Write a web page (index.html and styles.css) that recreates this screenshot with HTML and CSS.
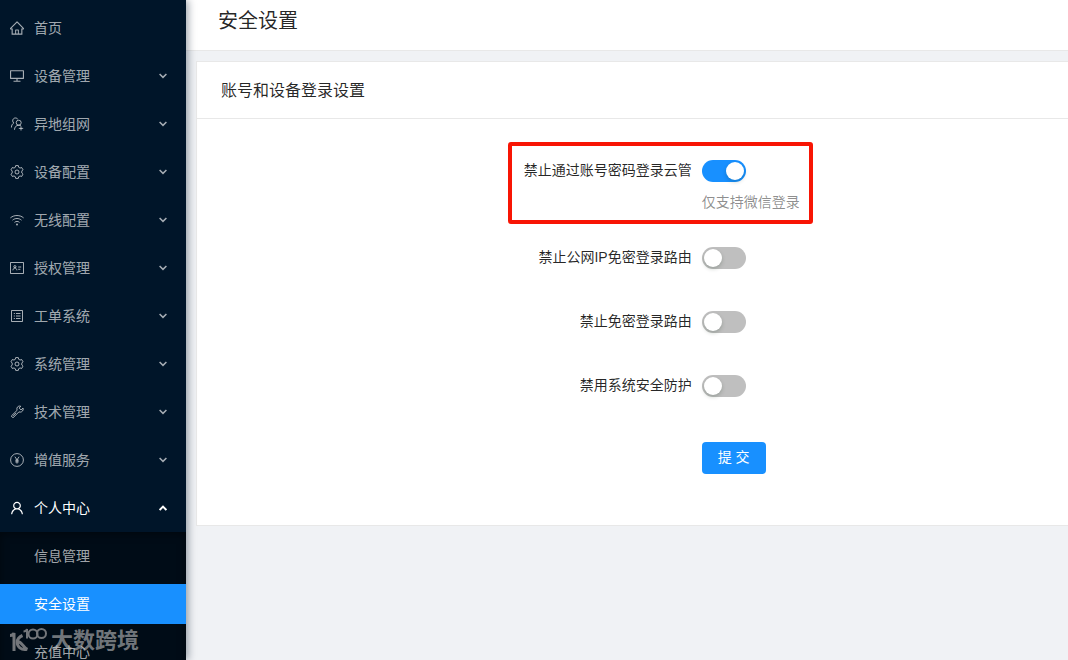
FILE: index.html
```html
<!DOCTYPE html>
<html lang="zh-CN">

<head>
    <meta charset="UTF-8">
    <meta name="viewport" content="width=device-width, initial-scale=1.0">
    <title>安全设置</title>
    <link rel="stylesheet" href="styles.css">
</head>

<body>
    <!-- 图标 -->
    <svg class="sprite" aria-hidden="true">
        <symbol id="icon-home" viewBox="64 64 896 896">
            <path fill="currentColor" stroke="none" d="M946.5 505L560.1 118.8l-25.9-25.9a31.5 31.5 0 0 0-44.4 0L77.5 505a63.9 63.9 0 0 0-18.8 46c.4 35.2 29.7 63.3 64.9 63.3h42.5V940h691.8V614.3h43.4c17.1 0 33.2-6.7 45.3-18.8a63.6 63.6 0 0 0 18.7-45.3c0-17-6.7-33.1-18.9-45.2zM568 868H456V664h112v204zm217.9-325.7V868H632V640c0-22.1-17.9-40-40-40H432c-22.1 0-40 17.9-40 40v228H238.1V542.3h-96l370-369.7 23.1 23.1L882 542.3h-96.1z" />
        </symbol>
        <symbol id="icon-desktop" viewBox="64 64 896 896">
            <path fill="currentColor" stroke="none" d="M928 140H96c-17.7 0-32 14.3-32 32v496c0 17.7 14.3 32 32 32h380v112H304c-8.8 0-16 7.2-16 16v48c0 4.4 3.6 8 8 8h432c4.4 0 8-3.6 8-8v-48c0-8.8-7.2-16-16-16H548V700h380c17.7 0 32-14.3 32-32V172c0-17.7-14.3-32-32-32zm-40 488H136V212h752v416z" />
        </symbol>
        <symbol id="icon-group" viewBox="0 0 14 14">
            <path d="M7.8 2.2A2.8 2.8 0 1 0 3.800 6C2.300 6.900 1.500 8.300 1.400 10.500" />
            <circle cx="8.700" cy="5.700" r="2.500" />
            <path d="M4.500 12.800C4.500 10.200 6.200 8.200 8.700 8.200c.9 0 1.600.2 2.200.6M8.800 11.400h4.400M11 9.300v4.200" />
        </symbol>
        <symbol id="icon-setting" viewBox="0 0 14 14">
            <path d="M5.700 .6h2.600l.4 1.700 1.300.75 1.700-.5 1.300 2.250-1.200 1.200v2l1.200 1.200-1.300 2.250-1.700-.5-1.300.75-.4 1.700H5.700l-.4-1.700-1.300-.75-1.700.5L1 9.200 2.200 8V6L1 4.800l1.300-2.250 1.700.5 1.300-.75z" />
            <circle cx="7" cy="7" r="2" />
        </symbol>
        <symbol id="icon-wifi" viewBox="0 0 14 14">
            <path d="M.4 4.900C4 1.700 10 1.700 13.600 4.900M2.500 7.200c2.600-2.300 6.400-2.300 9 0M4.500 9.400c1.500-1.300 3.500-1.300 5 0" />
            <circle cx="7" cy="11.400" r="1" fill="currentColor" stroke="none" />
        </symbol>
        <symbol id="icon-idcard" viewBox="0 0 14 14">
            <path d="M.5 1.500h13v11H.5zM8.200 6h3M8.200 8.300h2.200" />
            <circle cx="4.900" cy="5.700" r="1.100" />
            <path d="M2.900 9.300c.2-1.500 1-2.200 2-2.200s1.800.7 2 2.200" />
        </symbol>
        <symbol id="icon-profile" viewBox="0 0 14 14">
            <path d="M1.500 1.500h11v11h-11zM6 4.500h4.500M6 7h4.500M6 9.500h4.500M3.800 4.500h1.100M3.800 7h1.100M3.800 9.500h1.100" />
        </symbol>
        <symbol id="icon-tool" viewBox="0 0 14 14">
            <path d="M10.700 1.200C8.900.6 7.200 1.700 6.900 3.300c-.1.700 0 1.300.3 1.900L1.300 11l1.700 1.800 5.900-5.900c1.700.7 3.700-.2 4.200-2 .2-.6.1-1.200-.1-1.800l-1.900 1.900-1.900-1.900zM3 10.900l3-3" />
        </symbol>
        <symbol id="icon-pay" viewBox="0 0 14 14">
            <circle cx="7" cy="7" r="6.400" />
            <path d="M4.900 3.700L7 6.900l2.100-3.200M7 6.900v3.700M5.200 7.200h3.600M5.200 8.900h3.600" />
        </symbol>
        <symbol id="icon-user" viewBox="64 64 896 896">
            <path fill="currentColor" stroke="none" d="M858.5 763.6a374 374 0 0 0-80.6-119.5 375.63 375.63 0 0 0-119.5-80.6c-.4-.2-.8-.3-1.2-.5C719.5 518 760 444.7 760 362c0-137-111-248-248-248S264 225 264 362c0 82.700 40.500 156 102.800 201.100-.4.2-.8.3-1.200.5-44.800 18.900-85 46-119.500 80.600a375.630 375.630 0 0 0-80.600 119.500A371.700 371.700 0 0 0 136 901.800a8 8 0 0 0 8 8.200h60c4.400 0 7.900-3.500 8-7.800 2-77.200 33-149.500 87.800-204.300 56.700-56.700 132-87.900 212.200-87.900s155.500 31.200 212.200 87.900C779 752.700 810 825 812 902.200c.1 4.400 3.600 7.800 8 7.800h60a8 8 0 0 0 8-8.200c-1-47.800-10.900-94.300-29.500-138.200zM512 534c-45.900 0-89.100-17.900-121.600-50.400S340 407.900 340 362c0-45.900 17.900-89.100 50.400-121.600S466.100 190 512 190s89.100 17.900 121.600 50.400S684 316.100 684 362c0 45.900-17.900 89.100-50.400 121.600S557.900 534 512 534z" />
        </symbol>
        <symbol id="icon-arrow" viewBox="0 0 8 6">
            <path d="M.6 1L4 4.400 7.400 1" />
        </symbol>
    </svg>

    <div class="layout">
        <aside class="sider">
            <nav class="menu">
                <a class="menu-item" href="#"><svg class="icon"><use href="#icon-home" /></svg><span>首页</span></a>
                <button class="menu-item" type="button"><svg class="icon"><use href="#icon-desktop" /></svg><span>设备管理</span><svg class="arrow"><use href="#icon-arrow" /></svg></button>
                <button class="menu-item" type="button"><svg class="icon"><use href="#icon-group" /></svg><span>异地组网</span><svg class="arrow"><use href="#icon-arrow" /></svg></button>
                <button class="menu-item" type="button"><svg class="icon"><use href="#icon-setting" /></svg><span>设备配置</span><svg class="arrow"><use href="#icon-arrow" /></svg></button>
                <button class="menu-item" type="button"><svg class="icon"><use href="#icon-wifi" /></svg><span>无线配置</span><svg class="arrow"><use href="#icon-arrow" /></svg></button>
                <button class="menu-item" type="button"><svg class="icon"><use href="#icon-idcard" /></svg><span>授权管理</span><svg class="arrow"><use href="#icon-arrow" /></svg></button>
                <button class="menu-item" type="button"><svg class="icon"><use href="#icon-profile" /></svg><span>工单系统</span><svg class="arrow"><use href="#icon-arrow" /></svg></button>
                <button class="menu-item" type="button"><svg class="icon"><use href="#icon-setting" /></svg><span>系统管理</span><svg class="arrow"><use href="#icon-arrow" /></svg></button>
                <button class="menu-item" type="button"><svg class="icon"><use href="#icon-tool" /></svg><span>技术管理</span><svg class="arrow"><use href="#icon-arrow" /></svg></button>
                <button class="menu-item" type="button"><svg class="icon"><use href="#icon-pay" /></svg><span>增值服务</span><svg class="arrow"><use href="#icon-arrow" /></svg></button>
                <button class="menu-item open" type="button" aria-expanded="true"><svg class="icon"><use href="#icon-user" /></svg><span>个人中心</span><svg class="arrow"><use href="#icon-arrow" /></svg></button>
            </nav>
            <div class="submenu">
                <a class="submenu-item" href="#">信息管理</a>
                <a class="submenu-item active" href="#">安全设置</a>
                <a class="submenu-item" href="#">充值中心</a>
            </div>
            <!-- 水印 -->
            <div class="watermark">
                <svg class="watermark-logo" viewBox="0 0 38 28" aria-hidden="true">
                    <path d="M1 8.500c2 0 3.500-.8 4-2.500v18" />
                    <path d="M18 22.300c-6 1.200-9.800-2.800-9.800-7 0-3.500 2.300-5.500 5.300-6.800M9 14.500c4 .5 5.500 6.500 9.500 8" />
                    <g class="watermark-thin">
                        <path d="M14.500 4.500c2 0 3-.8 3.500-2.500v9.500" />
                        <circle cx="24" cy="7" r="4.500" />
                        <circle cx="32.500" cy="6.500" r="4.500" />
                    </g>
                </svg>
                <span>大数跨境</span>
            </div>
        </aside>

        <main class="main">
            <header class="page-header">
                <h1 class="page-title">安全设置</h1>
            </header>
            <section class="card">
                <h2 class="card-title">账号和设备登录设置</h2>
                <form class="form">
                    <div class="form-item">
                        <label class="form-label" for="ban-password">禁止通过账号密码登录云管</label>
                        <div class="form-control marked">
                            <input class="switch" type="checkbox" id="ban-password" checked>
                            <p class="form-extra">仅支持微信登录</p>
                        </div>
                    </div>
                    <div class="form-item">
                        <label class="form-label" for="ban-public-ip">禁止公网IP免密登录路由</label>
                        <div class="form-control"><input class="switch" type="checkbox" id="ban-public-ip"></div>
                    </div>
                    <div class="form-item">
                        <label class="form-label" for="ban-free">禁止免密登录路由</label>
                        <div class="form-control"><input class="switch" type="checkbox" id="ban-free"></div>
                    </div>
                    <div class="form-item">
                        <label class="form-label" for="ban-protect">禁用系统安全防护</label>
                        <div class="form-control"><input class="switch" type="checkbox" id="ban-protect"></div>
                    </div>
                    <div class="form-item form-footer">
                        <button class="submit" type="submit">提 交</button>
                    </div>
                </form>
            </section>
        </main>
    </div>
</body>

</html>
```
FILE: styles.css
```css
*,
*::before,
*::after {
    margin: 0;
    padding: 0;
    box-sizing: border-box;
}

body {
    font-family: "Liberation Sans", "Noto Sans CJK SC", sans-serif;
    font-size: 14px;
    color: rgba(0, 0, 0, 0.85);
    background-color: #f0f2f5;
}

button {
    font: inherit;
    border: none;
    cursor: pointer;
}

a {
    text-decoration: none;
}

.sprite {
    display: none;
}

.layout {
    display: flex;
    height: 100vh;
    overflow: hidden;
}

/* 侧边栏 */
.sider {
    position: relative;
    z-index: 1;
    flex: 0 0 186px;
    overflow: hidden;
    background-color: #001529;
    box-shadow: 2px 0 8px rgba(0, 21, 41, 0.4);
}

.menu {
    display: flex;
    flex-direction: column;
    gap: 8px;
    padding: 8px 0 4px;
}

.menu-item {
    display: flex;
    align-items: center;
    gap: 10px;
    height: 40px;
    padding: 0 19px 0 10px;
    line-height: 40px;
    color: rgba(255, 255, 255, 0.65);
    background: none;
}

.menu-item.open {
    color: #fff;
}

.icon {
    width: 14px;
    height: 14px;
    fill: none;
    stroke: currentColor;
}

.arrow {
    width: 8px;
    height: 6px;
    margin-left: auto;
    fill: none;
    stroke: currentColor;
    stroke-width: 1.5;
}

.open .arrow {
    transform: rotate(180deg);
    stroke-width: 2;
}

.submenu {
    display: flex;
    flex-direction: column;
    gap: 8px;
    padding: 4px 0;
    background-color: #000c17;
    box-shadow: inset 0 2px 8px rgba(0, 0, 0, 0.45);
}

.submenu-item {
    padding-left: 34px;
    line-height: 40px;
    color: rgba(255, 255, 255, 0.65);
}

.submenu-item.active {
    color: #fff;
    background-color: #1890ff;
}

.watermark {
    position: absolute;
    left: 9px;
    bottom: 4px;
    display: flex;
    align-items: center;
    gap: 4px;
    font-size: 22px;
    font-weight: 700;
    line-height: 30px;
    color: rgba(190, 190, 190, 0.6);
}

.watermark-logo {
    width: 38px;
    height: 28px;
    fill: none;
    stroke: #73767a;
    stroke-width: 3;
}

.watermark-thin {
    stroke-width: 2;
}

/* 内容区 */
.main {
    flex: 1;
    min-width: 0;
}

.page-header {
    padding: 0 32px 8px;
    background-color: #fff;
    border-bottom: 1px solid #e8e8e8;
}

.page-title {
    font-size: 20px;
    font-weight: 400;
    line-height: 42px;
}

.card {
    margin: 10px 0 0 10px;
    background-color: #fff;
    border: 1px solid #e8e8e8;
    border-right: none;
}

.card-title {
    padding: 2px 24px 0;
    font-size: 16px;
    font-weight: 400;
    line-height: 54px;
    border-bottom: 1px solid #e8e8e8;
}

.form {
    display: flex;
    flex-direction: column;
    gap: 24px;
    padding: 31px 24px 51px;
}

.form-item {
    display: grid;
    grid-template-columns: 11fr 8fr;
    column-gap: 10px;
}

.form-label {
    justify-self: end;
    line-height: 40px;
}

.form-control {
    position: relative;
    padding-top: 10px;
}

/* 红框 */
.marked::after {
    content: "";
    position: absolute;
    top: -8px;
    left: -194px;
    width: 305px;
    height: 82px;
    border: 4px solid #f81504;
    border-radius: 3px;
    pointer-events: none;
}

.form-extra {
    padding-top: 9px;
    line-height: 22px;
    color: rgba(0, 0, 0, 0.45);
}

.switch {
    display: block;
    width: 44px;
    height: 22px;
    padding: 2px;
    appearance: none;
    background-color: #bfbfbf;
    border-radius: 11px;
    cursor: pointer;
}

.switch::before {
    content: "";
    display: block;
    width: 18px;
    height: 18px;
    background-color: #fff;
    border-radius: 50%;
    box-shadow: 0 2px 4px rgba(0, 35, 11, 0.2);
}

.switch:checked {
    background-color: #1890ff;
}

.switch:checked::before {
    margin-left: auto;
}

.form-footer {
    padding-top: 13px;
}

.submit {
    grid-column: 2;
    justify-self: start;
    width: 64px;
    height: 32px;
    padding-bottom: 2px;
    line-height: 30px;
    color: #fff;
    background-color: #1890ff;
    border-radius: 4px;
}
```
